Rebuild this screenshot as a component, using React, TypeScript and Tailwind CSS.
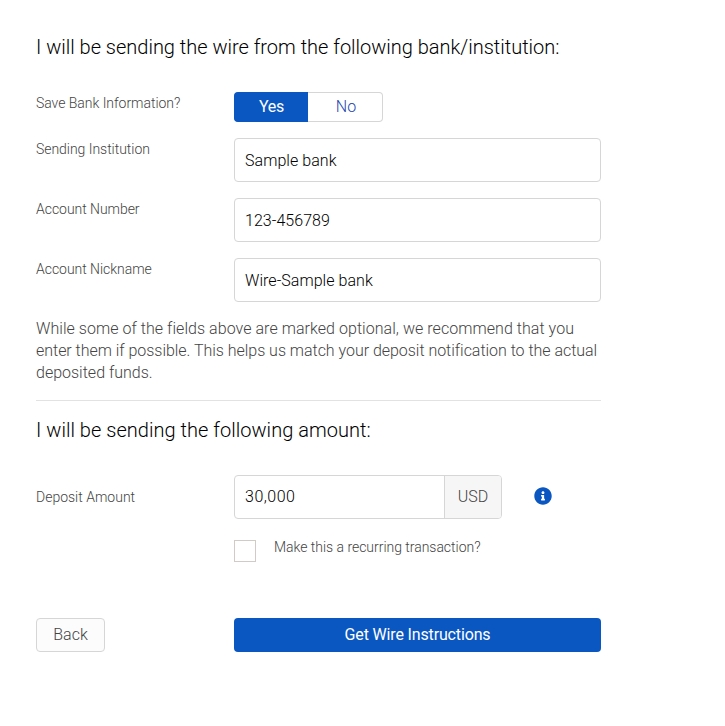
import React, { useState } from 'react';
import clsx from 'clsx';
import { FaInfoCircle } from 'react-icons/fa';

interface FieldRowProps {
  id: string;
  label: string;
  defaultValue: string;
}

const FieldRow: React.FC<FieldRowProps> = ({ id, label, defaultValue }) => (
  <div className="mb-4 flex h-11">
    <label htmlFor={id} className="w-[198px] shrink-0 pt-[1px] text-sm leading-5 tracking-[-0.04px]">
      {label}
    </label>
    <input
      id={id}
      type="text"
      defaultValue={defaultValue}
      className="h-11 min-w-0 flex-1 rounded border border-[#d6d6d6] px-2.5 text-base tracking-[0.05px] text-black"
    />
  </div>
);

const App: React.FC = () => {
  const [saveBank, setSaveBank] = useState(true);

  return (
    <div className="min-h-screen bg-white font-['Roboto',sans-serif] font-light text-[#444]">
      <form className="ml-9 w-[565px] pt-[33px]">
        <h2 className="h-[59px] text-xl leading-[28px] tracking-[-0.01px] text-black">
          I will be sending the wire from the following bank/institution:
        </h2>

        <div className="mb-4 flex h-[30px]">
          <span className="w-[198px] shrink-0 pt-[1px] text-sm leading-5 tracking-[-0.04px]">
            Save Bank Information?
          </span>
          <div className="flex w-[149px] text-base">
            <button
              type="button"
              onClick={() => setSaveBank(true)}
              className={clsx(
                'w-[74px] rounded-l border border-r-0',
                saveBank ? 'border-[#0b57c1] bg-[#0b57c1] font-normal tracking-[-0.3px] text-white' : 'border-[#d6d6d6] text-[#2346b0]'
              )}
            >
              Yes
            </button>
            <button
              type="button"
              onClick={() => setSaveBank(false)}
              className={clsx(
                'flex-1 rounded-r border border-l-0 pl-0.5',
                saveBank ? 'border-[#d6d6d6] text-[#2346b0]' : 'border-[#0b57c1] bg-[#0b57c1] font-normal text-white'
              )}
            >
              No
            </button>
          </div>
        </div>

        <FieldRow id="institution" label="Sending Institution" defaultValue="Sample bank" />
        <FieldRow id="account" label="Account Number" defaultValue="123-456789" />
        <FieldRow id="nickname" label="Account Nickname" defaultValue="Wire-Sample bank" />

        <p className="h-[82px] whitespace-nowrap text-base leading-[22px]">
          <span className="tracking-[0.05px]">
            While some of the fields above are marked optional, we recommend that you
          </span>
          <br />
          <span className="tracking-[-0.03px]">
            enter them if possible. This helps us match your deposit notification to the actual
          </span>
          <br />
          deposited funds.
        </p>

        <h2 className="border-t border-[#e2e2e2] pt-[15px] text-xl leading-[28px] tracking-[0.03px] text-black">
          I will be sending the following amount:
        </h2>

        <div className="mt-[31px] flex h-11 items-center">
          <label htmlFor="amount" className="w-[198px] shrink-0 text-sm leading-5">
            Deposit Amount
          </label>
          <div className="flex h-11 w-[268px] overflow-hidden rounded border border-[#d6d6d6] text-base">
            <input
              id="amount"
              type="text"
              defaultValue="30,000"
              className="min-w-0 flex-1 px-2.5 tracking-[0.5px] text-black"
            />
            <span className="flex w-[57px] items-center justify-center border-l border-[#d6d6d6] bg-[#f6f6f6]">USD</span>
          </div>
          <FaInfoCircle className="mb-0.5 ml-8 size-[18px] text-[#0b57c1]" />
        </div>

        <div className="ml-[198px] mt-[21px] flex h-[22px]">
          <input
            id="recurring"
            type="checkbox"
            className="size-[22px] appearance-none border border-[#d0cbc5] bg-white checked:bg-[#0b57c1]"
          />
          <label htmlFor="recurring" className="ml-[18px] -mt-[3px] text-sm leading-5 tracking-[-0.03px]">
            Make this a recurring transaction?
          </label>
        </div>

        <div className="mt-14 flex justify-between text-base">
          <button type="button" className="h-[34px] w-[69px] rounded border border-[#d6d6d6] bg-[#fcfcfc]">
            Back
          </button>
          <button
            type="submit"
            className="h-[34px] w-[367px] rounded bg-[#0b57c1] font-normal tracking-[-0.15px] text-white"
          >
            Get Wire Instructions
          </button>
        </div>
      </form>
    </div>
  );
};

export default App;
